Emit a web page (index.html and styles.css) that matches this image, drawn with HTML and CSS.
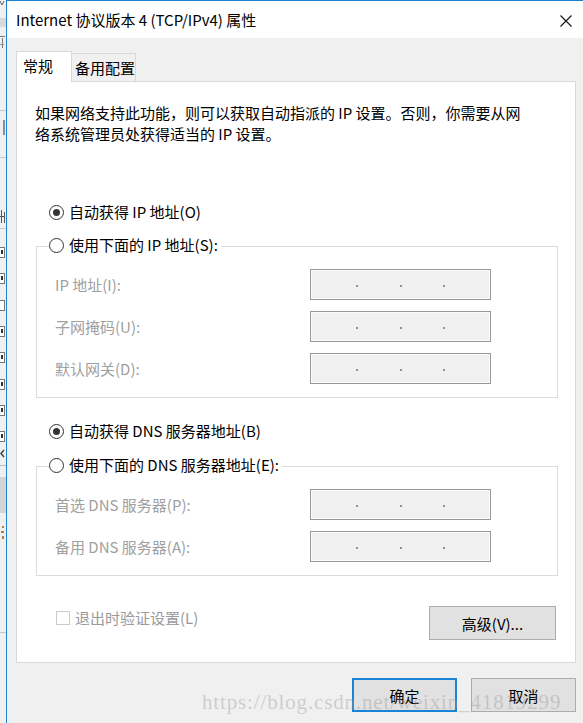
FILE: index.html
```html
<!DOCTYPE html>
<html lang="zh-CN">
<head>
<meta charset="utf-8">
<title>Internet 协议版本 4 (TCP/IPv4) 属性</title>
<link rel="stylesheet" href="styles.css">
</head>
<body>
<div class="screen">
  <div class="behind">
    <svg width="6" height="723" viewBox="0 0 6 723">
      <rect x="0" y="0" width="6" height="723" fill="#f0f0f0"/>
      <path d="M0 1 L2 5 L4 1" stroke="#666" stroke-width="1" fill="none"/>
      <rect x="0" y="18" width="6" height="9" fill="#d9d9d9"/>
      <rect x="0" y="36" width="5" height="1" fill="#777"/>
      <rect x="2" y="38" width="1" height="10" fill="#777"/>
      <rect x="0" y="44" width="4" height="1" fill="#999"/>
      <rect x="0" y="110" width="6" height="1" fill="#c8c8c8"/>
      <rect x="3" y="120" width="2" height="15" fill="#8090a8"/>
      <rect x="0" y="157" width="6" height="1" fill="#c8c8c8"/>
      <rect x="1" y="210" width="1" height="13" fill="#555"/>
      <rect x="0" y="216" width="4" height="1" fill="#555"/>
      <rect x="4" y="212" width="1" height="11" fill="#555"/>
      <rect x="0" y="228" width="6" height="1" fill="#c8c8c8"/>
      <g stroke="#777" stroke-width="1" fill="#fff">
        <rect x="-4.5" y="247.5" width="9" height="10"/>
        <rect x="-4.5" y="273.5" width="9" height="10"/>
        <rect x="-4.5" y="300.5" width="9" height="10"/>
        <rect x="-4.5" y="326.5" width="9" height="10"/>
        <rect x="-4.5" y="352.5" width="9" height="10"/>
        <rect x="-4.5" y="379.5" width="9" height="10"/>
        <rect x="-4.5" y="405.5" width="9" height="10"/>
        <rect x="-4.5" y="431.5" width="9" height="10"/>
      </g>
      <g fill="#333">
        <rect x="1" y="250" width="2" height="4"/>
        <rect x="1" y="276" width="2" height="4"/>
        <rect x="1" y="329" width="2" height="4"/>
        <rect x="1" y="355" width="2" height="4"/>
        <rect x="1" y="382" width="2" height="4"/>
        <rect x="1" y="408" width="2" height="4"/>
        <rect x="1" y="434" width="2" height="4"/>
      </g>
      <path d="M4 450 L1 453.5 L4 457" stroke="#444" stroke-width="1.5" fill="none"/>
      <rect x="0" y="465" width="6" height="1" fill="#bbb"/>
      <rect x="0" y="477" width="6" height="36" fill="#d4d4d4"/>
      <rect x="2" y="526" width="2" height="2" fill="#b08040"/>
      <rect x="1" y="531" width="3" height="2" fill="#b08040"/>
      <rect x="2" y="536" width="2" height="3" fill="#b08040"/>
      <rect x="0" y="632" width="6" height="1" fill="#c8c8c8"/>
    </svg>
  </div>
  <div class="window">
    <div class="titlebar">
      <span class="title">Internet 协议版本 4 (TCP/IPv4) 属性</span>
      <svg class="close" width="12" height="12" viewBox="0 0 12 12">
        <path d="M0.5 0.5 L11.5 11.5 M11.5 0.5 L0.5 11.5" stroke="#111" stroke-width="1.1" fill="none"/>
      </svg>
    </div>
    <div class="client">
      <div class="tabs">
        <div class="tab active">常规</div>
        <div class="tab">备用配置</div>
      </div>
      <div class="panel">
        <p class="desc">如果网络支持此功能，则可以获取自动指派的 IP 设置。否则，你需要从网<br>络系统管理员处获得适当的 IP 设置。</p>

        <div class="radio-row auto-ip"><span class="radio checked"></span><span>自动获得 IP 地址(O)</span></div>

        <fieldset class="group group-ip">
          <legend class="radio-row legend"><span class="radio"></span><span>使用下面的 IP 地址(S):</span></legend>
          <div class="fields">
            <span class="label">IP 地址(I):</span>
            <div class="ipbox"><i></i><i></i><i></i></div>
            <span class="label">子网掩码(U):</span>
            <div class="ipbox"><i></i><i></i><i></i></div>
            <span class="label">默认网关(D):</span>
            <div class="ipbox"><i></i><i></i><i></i></div>
          </div>
        </fieldset>

        <div class="radio-row auto-dns"><span class="radio checked"></span><span>自动获得 DNS 服务器地址(B)</span></div>

        <fieldset class="group group-dns">
          <legend class="radio-row legend"><span class="radio"></span><span>使用下面的 DNS 服务器地址(E):</span></legend>
          <div class="fields">
            <span class="label">首选 DNS 服务器(P):</span>
            <div class="ipbox"><i></i><i></i><i></i></div>
            <span class="label">备用 DNS 服务器(A):</span>
            <div class="ipbox"><i></i><i></i><i></i></div>
          </div>
        </fieldset>

        <div class="bottom-row">
          <div class="check"><span class="box"></span><span>退出时验证设置(L)</span></div>
          <button class="btn adv">高级(V)...</button>
        </div>
      </div>
      <div class="footer">
        <button class="btn ok">确定</button>
        <button class="btn">取消</button>
      </div>
    </div>
  </div>
  <div class="watermark">https://blog.csdn.net/weixin_41819299</div>
</div>
</body>
</html>
```
FILE: styles.css
```css
* {
  box-sizing: border-box;
}

html,
body {
  margin: 0;
  padding: 0;
}

body {
  width: 583px;
  height: 723px;
  overflow: hidden;
  background: #f0f0f0;
  font-family: "Noto Sans CJK SC", "Noto Sans", sans-serif;
  font-size: 15px;
  color: #000;
}

.screen {
  position: relative;
  display: flex;
  width: 583px;
  height: 723px;
}

.behind {
  flex: none;
  width: 6px;
}

.behind svg {
  display: block;
}

.window {
  flex: 1;
  display: flex;
  flex-direction: column;
  border-left: 1px solid #1883d7;
  border-top: 1px solid #1883d7;
  background: #f0f0f0;
}

.titlebar {
  flex: none;
  height: 37px;
  background: #fff;
  display: flex;
  align-items: center;
  justify-content: space-between;
  padding: 0 12px 0 9px;
}

.title {
  line-height: 21px;
}

.close {
  display: block;
  margin-top: 3px;
}

.client {
  padding: 13px 8px 0 9px;
}

.tabs {
  display: flex;
  align-items: flex-end;
  height: 30px;
  position: relative;
  z-index: 1;
}

.tab {
  height: 28px;
  width: 64px;
  padding-left: 3px;
  line-height: 27px;
  white-space: nowrap;
  background: #f0f0f0;
  border: 1px solid #d9d9d9;
  border-left: none;
  border-bottom: none;
}

.tab.active {
  width: 56px;
  height: 31px;
  margin-bottom: -1px;
  padding: 3px 0 0 6px;
  line-height: 21px;
  background: #fff;
  border-left: 1px solid #d9d9d9;
}

.panel {
  position: relative;
  background: #fff;
  border: 1px solid #d9d9d9;
  padding: 20px 17px 22px 18px;
}

.desc {
  margin: 0;
  line-height: 21px;
}

.radio-row {
  display: flex;
  align-items: center;
  gap: 5px;
  line-height: 21px;
}

.auto-ip {
  margin: 57px 0 0 14px;
}

.auto-dns {
  margin: 22px 0 0 14px;
}

.radio {
  flex: none;
  width: 15px;
  height: 15px;
  border: 1px solid #333;
  border-radius: 50%;
  display: flex;
  align-items: center;
  justify-content: center;
  margin-top: 2px;
}

.radio.checked::after {
  content: "";
  width: 7px;
  height: 7px;
  border-radius: 50%;
  background: #333;
}

.group {
  margin: 12px 0 0 1px;
  width: 522px;
  border: 1px solid #dcdcdc;
  padding: 10px 0 13px 12px;
  min-width: 0;
}

.group-dns {
  margin-top: 13px;
}

.legend {
  padding: 0 3px 4px 0;
  height: 25px;
  align-items: flex-start;
}

.legend .radio {
  margin-top: 4px;
}

.fields {
  margin-left: 6px;
  display: grid;
  grid-template-columns: 255px 181px;
  row-gap: 11px;
  align-items: center;
}

.label {
  color: #a0a0a0;
  line-height: 21px;
}

.ipbox {
  height: 31px;
  background: #f0f0f0;
  border: 1px solid #999;
  box-shadow: inset 0 0 0 1px #fbfbfb;
  display: flex;
  align-items: center;
  justify-content: space-evenly;
  padding: 2px 4px 0;
}

.ipbox i {
  display: block;
  width: 2px;
  height: 2px;
  background: #8a93a0;
}

.bottom-row {
  display: flex;
  justify-content: space-between;
  align-items: flex-start;
  margin: 30px 2px 0 21px;
}

.check {
  display: flex;
  align-items: center;
  gap: 5px;
  margin-top: 1px;
  line-height: 21px;
  color: #9a9a9a;
}

.box {
  width: 14px;
  height: 14px;
  border: 1px solid #cccccc;
  background: #fff;
}

.btn {
  font-family: inherit;
  font-size: 15px;
  color: #000;
  background: #e1e1e1;
  border: 1px solid #adadad;
  padding: 0;
  height: 34px;
  line-height: 21px;
}

.adv {
  width: 127px;
}

.footer {
  display: flex;
  justify-content: flex-end;
  gap: 14px;
  margin-top: 15px;
}

.footer .btn {
  width: 105px;
}

.btn.ok {
  border: 2px solid #1883d7;
}

.watermark {
  position: absolute;
  left: 202px;
  top: 690px;
  font-family: "Liberation Serif", serif;
  font-size: 21px;
  line-height: 24px;
  letter-spacing: 0.85px;
  color: rgba(150, 150, 150, 0.4);
  white-space: nowrap;
  pointer-events: none;
}
```
